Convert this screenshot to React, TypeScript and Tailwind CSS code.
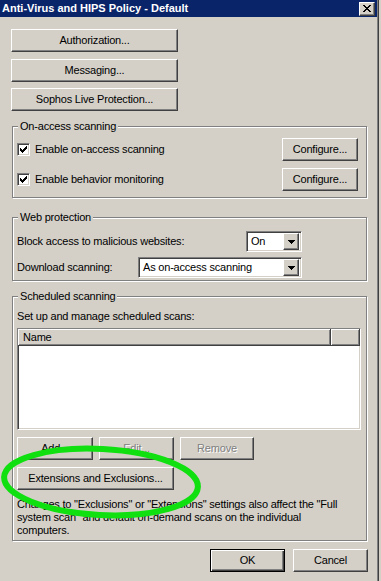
import React from 'react';

const raised =
  'border border-t-white border-l-white border-r-[#404040] border-b-[#404040] bg-[#d4d0c8] shadow-[inset_-1px_-1px_0_#808080]';
const sunken =
  'border border-t-[#808080] border-l-[#808080] border-r-white border-b-white shadow-[inset_1px_1px_0_#404040,inset_-1px_-1px_0_#d4d0c8]';
const groupBox =
  'relative border border-[#808080] shadow-[inset_1px_1px_0_#fff,1px_1px_0_#fff]';

type BtnProps = {
  children: React.ReactNode;
  className?: string;
  disabled?: boolean;
};

const Button: React.FC<BtnProps> = ({ children, className = '', disabled }) => (
  <button
    type="button"
    className={`${raised} flex h-[23px] items-center justify-center ${
      disabled ? 'text-[#808080] [text-shadow:1px_1px_0_#fff]' : ''
    } ${className}`}
  >
    {children}
  </button>
);

const Legend: React.FC<{ children: React.ReactNode }> = ({ children }) => (
  <span className="absolute -top-[7px] left-[5px] bg-[#d4d0c8] px-[2px] leading-[13px]">
    {children}
  </span>
);

const CheckMark = () => (
  <svg width="7" height="7" viewBox="0 0 7 7" shapeRendering="crispEdges">
    <path
      d="M0 2h1v3H0zM1 3h1v3H1zM2 4h1v3H2zM3 3h1v3H3zM4 2h1v3H4zM5 1h1v3H5zM6 0h1v3H6z"
      fill="#000"
    />
  </svg>
);

const Checkbox: React.FC<{ label: string }> = ({ label }) => (
  <div className="flex items-center">
    <span className={`${sunken} flex h-[13px] w-[13px] items-center justify-center bg-white`}>
      <CheckMark />
    </span>
    <span className="ml-[5px]">{label}</span>
  </div>
);

const DownArrow = () => (
  <svg width="7" height="4" viewBox="0 0 7 4" shapeRendering="crispEdges">
    <path d="M0 0h7v1H0zM1 1h5v1H1zM2 2h3v1H2zM3 3h1v1H3z" fill="#000" />
  </svg>
);

const Combo: React.FC<{ value: string; className: string }> = ({ value, className }) => (
  <div className={`${sunken} flex h-[21px] items-center bg-white p-[2px] ${className}`}>
    <span className="flex-1 pl-[2px]">{value}</span>
    <span className={`${raised} flex h-[17px] w-[16px] items-center justify-center`}>
      <DownArrow />
    </span>
  </div>
);

const CloseGlyph = () => (
  <svg width="8" height="7" viewBox="0 0 8 7" shapeRendering="crispEdges">
    <path
      d="M0 0h2v1H0zM6 0h2v1H6zM1 1h2v1H1zM5 1h2v1H5zM2 2h4v1H2zM3 3h2v1H3zM2 4h4v1H2zM1 5h2v1H1zM5 5h2v1H5zM0 6h2v1H0zM6 6h2v1H6z"
      fill="#000"
    />
  </svg>
);

export default function App() {
  return (
    <div className="relative flex h-[581px] w-[381px] overflow-hidden bg-[#d4d0c8] font-['Liberation_Sans',Arial,sans-serif] text-[11px] leading-[13px] tracking-[-0.2px] text-black">
      <div className="flex w-[379px] flex-col border-r border-r-[#404040] pr-[1px] shadow-[inset_-1px_0_0_#808080]">
        {/* title bar */}
        <div className="flex h-[17px] items-center justify-between bg-[#0a246a] pl-[2px] pr-[2px]">
          <span className="font-bold tracking-normal text-white">Anti-Virus and HIPS Policy - Default</span>
          <span className={`${raised} flex h-[14px] w-[16px] items-center justify-center`}>
            <CloseGlyph />
          </span>
        </div>

        <Button className="ml-[11px] mt-[12px] w-[167px]">Authorization...</Button>
        <Button className="ml-[11px] mt-[7px] w-[167px]">Messaging...</Button>
        <Button className="ml-[11px] mt-[6px] w-[167px]">Sophos Live Protection...</Button>

        {/* on-access scanning */}
        <div className={`${groupBox} ml-[12px] mt-[15px] flex w-[355px] flex-col gap-[7px] pb-[6px] pl-[4px] pr-[8px] pt-[11px]`}>
          <Legend>On-access scanning</Legend>
          <div className="flex h-[23px] items-center justify-between">
            <Checkbox label="Enable on-access scanning" />
            <Button className="w-[76px]">Configure...</Button>
          </div>
          <div className="flex h-[23px] items-center justify-between">
            <Checkbox label="Enable behavior monitoring" />
            <Button className="w-[76px]">Configure...</Button>
          </div>
        </div>

        {/* web protection */}
        <div className={`${groupBox} ml-[12px] mt-[19px] flex w-[355px] flex-col gap-[5px] pb-[2px] pl-[4px] pt-[13px]`}>
          <Legend>Web protection</Legend>
          <div className="flex items-center">
            <span className="w-[229px] shrink-0">Block access to malicious websites:</span>
            <Combo value="On" className="w-[56px]" />
          </div>
          <div className="flex items-center">
            <span className="w-[121px] shrink-0">Download scanning:</span>
            <Combo value="As on-access scanning" className="w-[164px]" />
          </div>
        </div>

        {/* scheduled scanning */}
        <div className={`${groupBox} ml-[12px] mt-[15px] flex w-[355px] flex-col pb-[3px] pl-[4px] pt-[13px]`}>
          <Legend>Scheduled scanning</Legend>
          <span>Set up and manage scheduled scans:</span>
          <div className={`${sunken} mt-[5px] h-[102px] w-[344px] bg-white`}>
            <div className="flex h-[17px] bg-[#d4d0c8]">
              <div className="flex w-[313px] items-center border-b border-r border-b-[#404040] border-r-[#404040] pl-[5px] shadow-[inset_1px_1px_0_#fff,inset_-1px_-1px_0_#808080]">
                Name
              </div>
              <div className="flex-1 border-b border-r border-b-[#404040] border-r-[#404040] shadow-[inset_1px_1px_0_#fff,inset_-1px_-1px_0_#808080]" />
            </div>
          </div>
          <div className="mt-[7px] flex gap-[6px]">
            <Button className="w-[76px]">Add...</Button>
            <Button className="w-[75px]" disabled>
              Edit...
            </Button>
            <Button className="w-[74px]" disabled>
              Remove
            </Button>
          </div>
          <Button className="mt-[7px] w-[157px]">Extensions and Exclusions...</Button>
          <p className="mt-[8px]">
            Changes to "Exclusions" or "Extensions" settings also affect the "Full
            <br />
            system scan" and default on-demand scans on the individual
            <br />
            computers.
          </p>
        </div>

        {/* dialog buttons */}
        <div className="mt-[8px] flex gap-[8px] pl-[210px]">
          <button
            type="button"
            className="flex h-[23px] w-[75px] items-center justify-center border border-black bg-[#d4d0c8] shadow-[inset_1px_1px_0_#fff,inset_-1px_-1px_0_#404040,inset_-2px_-2px_0_#808080]"
          >
            OK
          </button>
          <Button className="w-[75px]">Cancel</Button>
        </div>
      </div>
      <div className="w-[2px] bg-[#d4d0c8]" />

      {/* green highlight drawn over the screenshot */}
      <svg className="pointer-events-none absolute left-0 top-0" width="381" height="581">
        <ellipse
          cx="101"
          cy="482"
          rx="97"
          ry="33"
          fill="none"
          stroke="#10e010"
          strokeWidth="6"
          transform="rotate(3 101 482)"
        />
      </svg>
    </div>
  );
}
